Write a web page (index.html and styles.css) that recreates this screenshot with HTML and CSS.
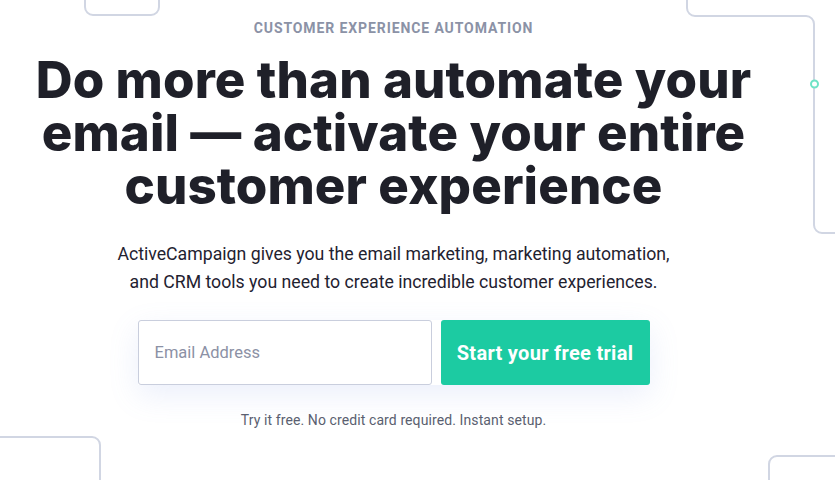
FILE: index.html
```html
<!DOCTYPE html>
<html lang="en">
<head>
<meta charset="utf-8">
<link rel="stylesheet" href="styles.css">
</head>
<body>
<div class="page">
  <svg class="deco" width="835" height="480" viewBox="0 0 835 480" fill="none">
    <path d="M85 0 V7 a8 8 0 0 0 8 8 H151 a8 8 0 0 0 8 -8 V0" stroke="#d1d6e3" stroke-width="2"/>
    <path d="M687 0 V8 a8 8 0 0 0 8 8 H806 a8 8 0 0 1 8 8 V225 a8 8 0 0 0 8 8 H835" stroke="#d1d6e3" stroke-width="2"/>
    <circle cx="814.5" cy="84" r="3.5" fill="#fff" stroke="#6fe3c6" stroke-width="2"/>
    <path d="M0 437 H92 a8 8 0 0 1 8 8 V480" stroke="#d1d6e3" stroke-width="2"/>
    <path d="M769 480 V464 a8 8 0 0 1 8 -8 H835" stroke="#d1d6e3" stroke-width="2"/>
  </svg>
  <main class="hero">
    <p class="eyebrow">CUSTOMER EXPERIENCE AUTOMATION</p>
    <h1 class="title">Do more than automate your email — activate your entire customer experience</h1>
    <p class="lead">ActiveCampaign gives you the email marketing, marketing automation,<br>and CRM tools you need to create incredible customer experiences.</p>
    <form class="signup">
      <input class="email" type="email" placeholder="Email Address">
      <button class="cta" type="button">Start your free trial</button>
    </form>
    <p class="note">Try it free. No credit card required. Instant setup.</p>
  </main>
</div>
</body>
</html>
```
FILE: styles.css
```css
* { box-sizing: border-box; }
html, body { margin: 0; padding: 0; background: #fff; }
.page {
  position: relative;
  width: 835px;
  height: 480px;
  overflow: hidden;
  font-family: "Roboto", "Liberation Sans", sans-serif;
}
.deco { position: absolute; left: 0; top: 0; pointer-events: none; }
.hero {
  width: 787px;
  display: flex;
  flex-direction: column;
  align-items: center;
  text-align: center;
  padding-top: 20px;
}
.eyebrow {
  margin: 0;
  font-size: 14px;
  line-height: 16px;
  font-weight: 700;
  letter-spacing: 0.9px;
  color: #8b92a6;
}
.title {
  margin: 17px 0 0;
  width: 780px;
  font-family: "Inter", "Liberation Sans", sans-serif;
  font-weight: 800;
  font-size: 51px;
  line-height: 53px;
  letter-spacing: 0.1px;
  color: #1f2029;
}
.lead {
  margin: 28px 0 0;
  font-size: 17.7px;
  line-height: 28px;
  color: #1f2230;
}
.signup {
  margin-top: 24px;
  display: flex;
  gap: 9px;
  box-shadow: 0 10px 30px rgba(120, 150, 230, 0.15);
}
.email {
  width: 294px;
  height: 65px;
  border: 1px solid #c9cedd;
  border-radius: 3px;
  padding: 0 16px;
  font-family: inherit;
  font-size: 16.5px;
  color: #1f2230;
  background: #fff;
  outline: none;
}
.email::placeholder { color: #8c91a5; }
.cta {
  width: 209px;
  height: 65px;
  border: 0;
  border-radius: 3px;
  background: #1ccba2;
  color: #fff;
  font-family: inherit;
  font-weight: 700;
  font-size: 20px;
  letter-spacing: 0.3px;
  cursor: pointer;
}
.note {
  margin: 26px 0 0;
  font-size: 14px;
  line-height: 18px;
  letter-spacing: 0.1px;
  color: #5a5f70;
}
```
